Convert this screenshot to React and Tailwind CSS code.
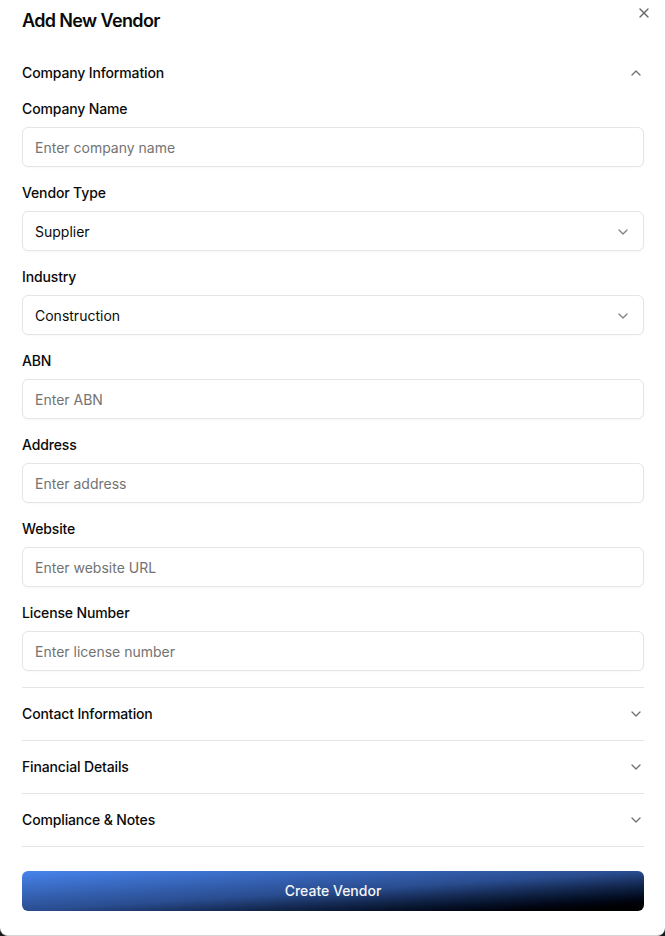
import React from "react";
import { X, ChevronUp, ChevronDown } from "lucide-react";

const font = { fontFamily: "Inter, 'Noto Sans', sans-serif" };

function Field({ label, placeholder, value, select }) {
  return (
    <div className="flex flex-col gap-2">
      <label className="text-sm leading-5 font-medium tracking-[-0.01em] text-[#0a0a0a]">{label}</label>
      <div className="flex h-10 items-center justify-between rounded-md border border-[#e5e5e5] bg-white px-3 pt-px text-sm shadow-[0_1px_2px_rgba(0,0,0,0.03)]">
        {select ? (
          <span className="text-[#0a0a0a]">{value}</span>
        ) : (
          <span className="text-[#737373]">{placeholder}</span>
        )}
        {select && <ChevronDown className="h-4 w-4 text-[#0a0a0a] opacity-50" strokeWidth={2} />}
      </div>
    </div>
  );
}

function Collapsed({ title }) {
  return (
    <div className="border-b border-[#e5e5e5]">
      <div className="flex items-center justify-between py-4 text-sm leading-5 font-medium tracking-[-0.01em] text-[#0a0a0a]">
        <span>{title}</span>
        <ChevronDown className="h-4 w-4 text-[#737373]" strokeWidth={2} />
      </div>
    </div>
  );
}

export default function App() {
  return (
    <div className="w-[665px] h-[936px] bg-[#1a1a1a]" style={font}>
      <div className="relative h-[936px] w-[665px] overflow-hidden rounded-b-[8px] border-b border-[#d4d4d4] bg-white pl-[22px] pr-[21px] pt-[7px]">
        <button className="absolute right-[13px] top-[5px] text-[#404040] opacity-80">
          <X className="h-4 w-4" strokeWidth={2} />
        </button>
        <h2 className="text-lg leading-7 font-semibold tracking-[-0.035em] text-[#0a0a0a]">Add New Vendor</h2>
        <div className="mt-3">
          <div className="border-b border-[#e5e5e5]">
            <div className="flex items-center justify-between py-4 text-sm leading-5 font-medium tracking-[-0.01em] text-[#0a0a0a]">
              <span>Company Information</span>
              <ChevronUp className="h-4 w-4 text-[#737373]" strokeWidth={2} />
            </div>
            <div className="flex flex-col gap-4 pb-4">
              <Field label="Company Name" placeholder="Enter company name" />
              <Field label="Vendor Type" value="Supplier" select />
              <Field label="Industry" value="Construction" select />
              <Field label="ABN" placeholder="Enter ABN" />
              <Field label="Address" placeholder="Enter address" />
              <Field label="Website" placeholder="Enter website URL" />
              <Field label="License Number" placeholder="Enter license number" />
            </div>
          </div>
          <Collapsed title="Contact Information" />
          <Collapsed title="Financial Details" />
          <Collapsed title="Compliance & Notes" />
        </div>
        <button className="mt-6 flex h-10 w-full items-center justify-center rounded-md bg-gradient-to-br from-[#4784ee] via-[#2a4d90] to-black text-sm font-medium text-[#f5f5f5]">
          Create Vendor
        </button>
      </div>
    </div>
  );
}
